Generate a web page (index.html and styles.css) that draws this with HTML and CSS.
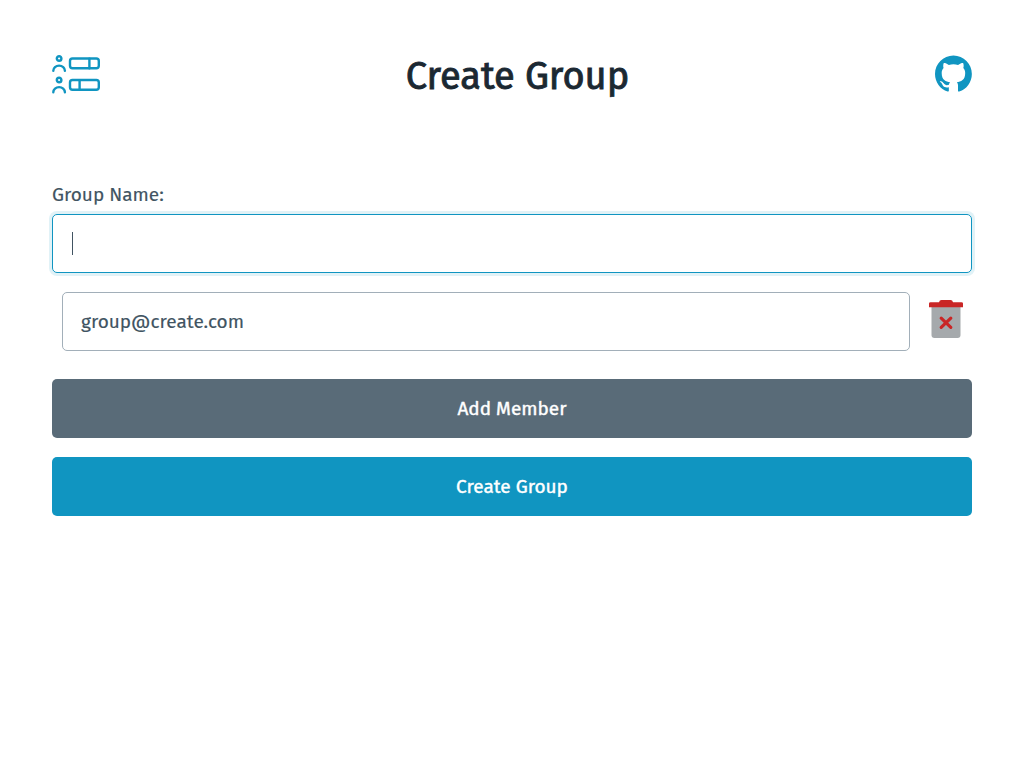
FILE: index.html
```html
<!DOCTYPE html>
<html lang="en">
<head>
<meta charset="utf-8">
<title>Create Group</title>
<link rel="stylesheet" href="styles.css">
</head>
<body>
<main class="container">
  <header class="header">
    <a class="logo" aria-label="Home">
      <svg width="48" height="40" viewBox="0 -0.3 48 40" fill="none" stroke="currentColor" stroke-width="2.4" stroke-linecap="round">
        <circle cx="7.100" cy="4.200" r="2.300"/>
        <path d="M1.300 16.500A5.800 5.200 0 0 1 12.900 16.500"/>
        <rect x="18" y="4.200" width="28.800" height="9.800" rx="2.500"/>
        <path d="M37.400 4.400V14"/>
        <circle cx="7.100" cy="25.700" r="2.300"/>
        <path d="M1.300 38A5.800 5.200 0 0 1 12.900 38"/>
        <rect x="18" y="25.700" width="28.800" height="9.800" rx="2.500"/>
        <path d="M27.600 25.800V35.500"/>
      </svg>
    </a>
    <h1 class="title">Create Group</h1>
    <a class="github" aria-label="GitHub">
      <svg width="37" height="37" viewBox="0 -1 98 98" fill="currentColor"><path d="M48.854 0C21.839 0 0 22 0 49.217c0 21.756 13.993 40.172 33.405 46.690 2.427.49 3.316-1.059 3.316-2.362 0-1.141-.08-5.052-.08-9.127-13.590 2.934-16.420-5.867-16.420-5.867-2.184-5.704-5.420-7.170-5.420-7.170-4.448-3.015.324-3.015.324-3.015 4.934.326 7.523 5.052 7.523 5.052 4.367 7.496 11.404 5.378 14.235 4.074.404-3.178 1.699-5.378 3.074-6.600-10.839-1.141-22.243-5.378-22.243-24.283 0-5.378 1.940-9.778 5.014-13.200-.485-1.222-2.184-6.275.486-13.038 0 0 4.125-1.304 13.426 5.052a46.970 46.970 0 0 1 12.214-1.630c4.125 0 8.330.571 12.213 1.630 9.302-6.356 13.427-5.052 13.427-5.052 2.670 6.763.970 11.816.485 13.038 3.155 3.422 5.015 7.822 5.015 13.200 0 18.905-11.404 23.060-22.324 24.283 1.780 1.548 3.316 4.481 3.316 9.126 0 6.600-.08 11.897-.08 13.526 0 1.304.890 2.853 3.316 2.364 19.412-6.520 33.405-24.935 33.405-46.691C97.707 22 75.788 0 48.854 0z"/></svg>
    </a>
  </header>
  <form class="form">
    <label class="label">Group Name:</label>
    <div class="field field-focus"><span class="caret"></span></div>
    <div class="member">
      <div class="field member-field">group@create.com</div>
      <a class="remove" aria-label="Remove member">
        <svg width="34" height="38" viewBox="0 0 34 38">
          <path fill="#a5a9ac" d="M2.500 7H31.500V35Q31.500 38 28.500 38H5.500Q2.500 38 2.500 35Z"/>
          <path fill="#c92626" d="M0 3.500Q0 2.200 1.500 2.200H10Q10.500 0 12.500 0H21.500Q23.500 0 24 2.200H32.500Q34 2.200 34 3.500V7.300H0Z"/>
          <path d="M12.200 18.200L21.800 27.400M21.800 18.200L12.200 27.400" fill="none" stroke="#c92626" stroke-width="3.200" stroke-linecap="round"/>
        </svg>
      </a>
    </div>
    <button class="button button-secondary" type="button">Add Member</button>
    <button class="button button-primary" type="button">Create Group</button>
  </form>
</main>
</body>
</html>
```
FILE: styles.css
```css
* { box-sizing: border-box; }
body {
  margin: 0;
  background: #fff;
  color: #415462;
  font: 400 19px/30px "Fira Sans", "Noto Sans", sans-serif;
  -webkit-text-stroke: 0.15px currentColor;
}
.container { padding: 46px 52px 0; }
.header {
  display: flex;
  justify-content: space-between;
  height: 134px;
}
.logo, .github { color: #1095c1; }
.logo { padding-top: 8px; }
.github { padding-top: 9px; }
.logo svg, .github svg, .remove svg { display: block; }
.title {
  margin: 0;
  color: #1b2832;
  font-size: 38px;
  font-weight: 400;
  line-height: 60px;
  -webkit-text-stroke: 0.9px currentColor;
}
.form { display: flex; flex-direction: column; }
.label { height: 34px; }
.field {
  display: flex;
  align-items: center;
  height: 59px;
  padding: 0 19px;
  border: 1px solid #a2afb9;
  border-radius: 5px;
}
.field-focus {
  border-color: #1095c1;
  box-shadow: 0 0 0 3px rgba(16, 149, 193, 0.125);
}
.caret { width: 1px; height: 23px; background: #415462; }
.member {
  display: flex;
  gap: 19px;
  margin-top: 19px;
  padding: 0 9px 0 10px;
}
.member-field { flex: 1; padding: 0 18px; }
.remove { padding-top: 8px; }
.button {
  height: 59px;
  padding: 0;
  border: 0;
  border-radius: 5px;
  color: #fff;
  font: inherit;
  -webkit-text-stroke: 0.4px currentColor;
}
.button-secondary { margin-top: 28px; background: #596b78; }
.button-primary { margin-top: 19px; background: #1095c1; }
```
